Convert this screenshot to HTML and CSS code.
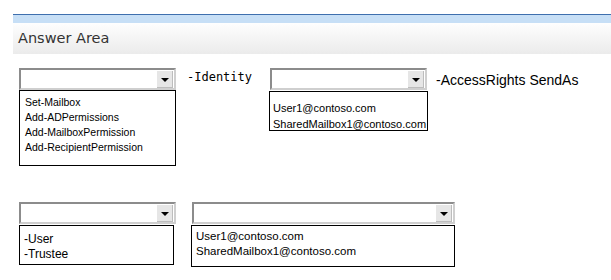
FILE: index.html
```html
<!DOCTYPE html>
<html lang="en">

<head>
  <meta charset="UTF-8">
  <title>Answer Area</title>
  <link rel="stylesheet" href="styles.css">
</head>

<body>
  <div class="panel">
    <div class="topbar"></div>
    <div class="header">Answer Area</div>
    <div class="content">
      <div class="row">
        <div class="field field-cmd">
          <div class="select"><span class="arrow"></span></div>
          <ul class="options options-cmd">
            <li>Set-Mailbox</li>
            <li>Add-ADPermissions</li>
            <li>Add-MailboxPermission</li>
            <li>Add-RecipientPermission</li>
          </ul>
        </div>
        <span class="param param-identity">-Identity</span>
        <div class="field field-id">
          <div class="select"><span class="arrow"></span></div>
          <ul class="options options-id">
            <li>User1@contoso.com</li>
            <li>SharedMailbox1@contoso.com</li>
          </ul>
        </div>
        <span class="param param-rights">-AccessRights SendAs</span>
      </div>
      <div class="row row-second">
        <div class="field field-cmd">
          <div class="select"><span class="arrow"></span></div>
          <ul class="options options-user">
            <li>-User</li>
            <li>-Trustee</li>
          </ul>
        </div>
        <div class="field field-wide">
          <div class="select"><span class="arrow"></span></div>
          <ul class="options options-wide">
            <li>User1@contoso.com</li>
            <li>SharedMailbox1@contoso.com</li>
          </ul>
        </div>
      </div>
    </div>
  </div>
</body>

</html>
```

FILE: styles.css
```css
body {
  margin: 0;
  background-color: #fff;
  font-family: "Liberation Sans", Arial, sans-serif;
  color: #000;
}

.panel {
  margin: 14px 0 0 13px;
}

.topbar {
  height: 8px;
  border-top: 1px solid #3f6fae;
  background-color: #c7dff6;
}

.header {
  height: 31px;
  line-height: 30px;
  padding-left: 5px;
  font-family: "DejaVu Sans", Verdana, sans-serif;
  font-size: 14.5px;
  color: #333;
  background: linear-gradient(#fefefe, #ebebeb);
}

.content {
  padding: 14px 0 0 6px;
}

.row {
  display: flex;
  align-items: flex-start;
}

.row-second {
  margin-top: 36px;
}

.field {
  display: flex;
  flex-direction: column;
}

.field-cmd {
  width: 157px;
}

.field-id {
  width: 157px;
}

.field-wide {
  width: 263px;
  margin-left: 16px;
}

.select {
  position: relative;
  height: 22px;
  box-sizing: border-box;
  border: 2px solid;
  border-color: #8c8c8c #cfcfcf #cfcfcf #8c8c8c;
  background-color: #fff;
}

.arrow {
  position: absolute;
  top: 1px;
  right: 1px;
  width: 15px;
  height: 16px;
  background-color: #e6e6e6;
  border-right: 1px solid #bdbdbd;
  border-bottom: 1px solid #bdbdbd;
}

.arrow::after {
  content: "";
  position: absolute;
  top: 7px;
  left: 4px;
  border-left: 4px solid transparent;
  border-right: 4px solid transparent;
  border-top: 4px solid #000;
}

.options {
  list-style: none;
  margin: 0;
  border: 1px solid #000;
  background-color: #fff;
  font-size: 11px;
}

.options li {
  white-space: nowrap;
}

.options-cmd {
  height: 70px;
  padding: 4px 0 0 5px;
  line-height: 15px;
  font-size: 10.5px;
}

.options-id {
  width: 159px;
  height: 40px;
  box-sizing: border-box;
  margin: 1px 0 0 -1px;
  padding: 8px 0 0 3px;
  line-height: 16px;
}

.options-user {
  width: 155px;
  height: 40px;
  box-sizing: border-box;
  margin-top: 1px;
  padding: 6px 0 0 4px;
  line-height: 15px;
  font-size: 12px;
}

.options-wide {
  width: 264px;
  height: 42px;
  box-sizing: border-box;
  margin: 1px 0 0 -1px;
  padding: 3px 0 0 4px;
  line-height: 15px;
  font-size: 11.5px;
}

.param {
  white-space: nowrap;
}

.param-identity {
  margin: 2px 18px 0 11px;
  font-family: "DejaVu Sans Mono", "Liberation Mono", monospace;
  font-size: 12px;
}

.param-rights {
  margin: 4px 0 0 9px;
  font-size: 14px;
}
```
